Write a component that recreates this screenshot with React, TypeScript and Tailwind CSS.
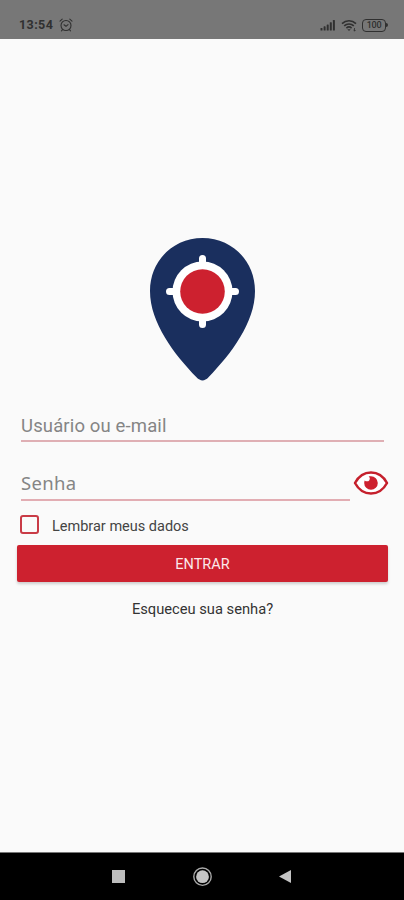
function StatusBar() {
  return (
    <header className="flex h-[39px] shrink-0 items-center bg-[#777777] pt-[11px] pl-[19px] pr-[16px] text-[#303030]">
      <span className="w-[34px] whitespace-nowrap text-[12.5px] leading-none font-bold tracking-[0.4px]">13:54</span>
      <svg className="ml-[6px] h-[14px] w-[14px]" viewBox="0 0 14 14" fill="none" stroke="currentColor" strokeWidth="1.1" strokeLinecap="round">
        <circle cx="7" cy="7.5" r="5" />
        <path d="M1 3.2 3.2 1.2M13 3.2 10.8 1.2M5 6.8l2 1.5 2-1.7M3.5 11.7l-1 1.2M10.5 11.7l1 1.2" />
      </svg>
      <svg className="ml-auto h-[12px] w-[16px]" viewBox="0 0 16 12" fill="currentColor">
        <rect x=".5" y="9" width="2" height="2.5" rx=".6" />
        <rect x="3.6" y="7.3" width="2" height="4.2" rx=".6" />
        <rect x="6.7" y="5.4" width="2" height="6.1" rx=".6" />
        <rect x="9.8" y="3.2" width="2" height="8.3" rx=".6" />
        <rect x="12.9" y="1" width="2" height="10.5" rx=".6" />
      </svg>
      <svg className="ml-[5px] h-[13px] w-[16px]" viewBox="0 0 16 13" fill="none" stroke="currentColor" strokeWidth="1.6">
        <path d="M1 4.6C5 .7 11 .7 15 4.6M3.2 6.9c2.7-2.6 6.9-2.6 9.6 0M5.4 9.1c1.5-1.4 3.7-1.4 5.2 0" />
        <path d="M6.3 10.2 8 12l1.7-1.8Z" fill="currentColor" stroke="none" />
        <path d="M13.5 9v3M12.4 11l1.1 1.1 1.1-1.1" strokeWidth=".8" />
      </svg>
      <span className="ml-[5px] flex h-[13px] w-[24px] items-center justify-center rounded-[4px] border-[1.5px] border-[#303030] text-[9px] leading-none font-medium tracking-[-0.3px]">
        100
      </span>
      <span className="h-[4px] w-[2px] rounded-r-sm bg-[#303030]" />
    </header>
  );
}

function PinLogo() {
  return (
    <svg className="ml-[149px] h-[144px] w-[107px]" viewBox="149 237 107 144">
      <path
        d="M202.5 238c-29.500 0-52.500 23-52.500 53 0 32 24.500 63.500 46.500 86.300 4 4.200 8 4.200 12 0C230.500 354.500 255 323 255 291c0-30-23-53-52.500-53Z"
        fill="#1a2f5e"
      />
      <path d="M202.500 258.500V324.500M169.500 291.500H235.500" stroke="#fff" strokeWidth="7" strokeLinecap="round" />
      <circle cx="202.500" cy="291.500" r="30" fill="#fff" />
      <circle cx="202.500" cy="291.500" r="22.300" fill="#cd212f" />
    </svg>
  );
}

function EyeIcon() {
  return (
    <svg className="h-[26px] w-[36px]" viewBox="0 0 36 26">
      <path d="M2 13C9.500-1 26.500-1 34 13 26.500 27 9.500 27 2 13Z" fill="#fff" stroke="#c5202c" strokeWidth="2.500" strokeLinejoin="round" />
      <path d="M18 6.200a6.800 6.800 0 1 1-6.800 6.800c0-1 .200-1.800.500-2.600 1.300 1.300 3.500 1.200 4.500 0 1-1.200.800-3-.600-3.800.700-.300 1.500-.400 2.400-.400Z" fill="#cd212f" />
    </svg>
  );
}

function NavigationBar() {
  return (
    <nav className="mt-auto flex h-[48px] shrink-0 items-center border-t border-[#777] bg-black pl-[112px]">
      <span className="h-[13px] w-[13px] bg-[#bdbdbd]" />
      <svg className="ml-[67px] h-[20px] w-[20px]" viewBox="0 0 20 20">
        <circle cx="10.500" cy="9.700" r="8.700" fill="none" stroke="#aaa" strokeWidth="1.400" />
        <circle cx="10.500" cy="9.700" r="6.400" fill="#c4c4c4" />
      </svg>
      <svg className="ml-[66px] h-[14px] w-[14px]" viewBox="0 0 14 14">
        <path d="M1 6.500 13 0V13Z" fill="#c4c4c4" />
      </svg>
    </nav>
  );
}

export default function App() {
  return (
    <div className="flex h-[900px] w-[404px] flex-col overflow-hidden bg-[#fafafa] font-[Roboto,sans-serif]">
      <StatusBar />
      <main className="flex flex-col pt-[198px]">
        <PinLogo />
        <div className="mt-[32px] ml-[21px] flex h-[29px] w-[363px] border-b-2 border-[#dfafb4]">
          <span className="text-[18.5px] leading-[27px] tracking-[0.14px] whitespace-nowrap text-[#858585]">Usuário ou e-mail</span>
        </div>
        <div className="mt-[28px] flex h-[31px] pl-[21px]">
          <div className="flex h-[31px] w-[329px] border-b-2 border-[#e2adb3]">
            <span className="font-['Noto_Sans',sans-serif] text-[18.5px] leading-[26px] tracking-[0.3px] whitespace-nowrap text-[#858585]">Senha</span>
          </div>
          <div className="ml-[3px]">
            <EyeIcon />
          </div>
        </div>
        <label className="mt-[12px] ml-[20px] flex h-[24px] items-center">
          <span className="-mt-px h-[19px] w-[19px] rounded-[3px] border-2 border-[#c93b46]" />
          <span className="ml-[13px] pt-[3px] text-[14.5px] whitespace-nowrap text-[#444]">Lembrar meus dados</span>
        </label>
        <button className="mt-[8px] ml-[17px] h-[37px] w-[371px] rounded-[2px] bg-[#cd212f] pt-[3px] text-[14.5px] text-[#fbe9ea] shadow-[0_2px_3px_rgba(0,0,0,0.18)]">
          ENTRAR
        </button>
        <a className="mt-[17px] ml-px self-center text-[14.7px] leading-[21px] whitespace-nowrap text-[#333]">Esqueceu sua senha?</a>
      </main>
      <NavigationBar />
    </div>
  );
}
